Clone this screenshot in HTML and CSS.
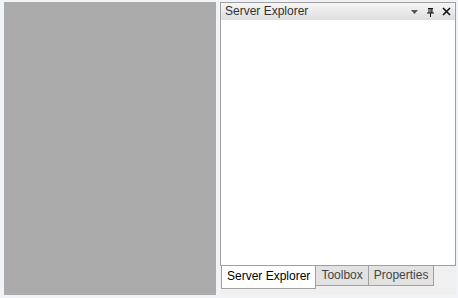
FILE: index.html
```html
<!DOCTYPE html>
<html>
<head>
<meta charset="utf-8">
<link rel="stylesheet" href="styles.css">
</head>
<body>
<div class="layout">
  <div class="doc-area"></div>
  <div class="dock">
    <div class="pane">
      <div class="pane-header">
        <span class="pane-title">Server Explorer</span>
        <span class="pane-buttons">
          <svg width="9" height="9" viewBox="0 0 9 9"><path d="M1 3h7L4.5 7z" fill="#555"/></svg>
          <svg width="9" height="10" viewBox="0 0 9 10"><path d="M2 1.5h5M3 1v5M6 1v5M1 6h7M4.5 6v4" stroke="#111" stroke-width="1" fill="none"/><path d="M5 1v5" stroke="#111" stroke-width="1"/></svg>
          <svg width="9" height="9" viewBox="0 0 9 9"><path d="M1 1l7 7M8 1l-7 7" stroke="#111" stroke-width="1.6"/></svg>
        </span>
      </div>
      <div class="pane-body"></div>
    </div>
    <div class="tabstrip">
      <div class="tab active">Server Explorer</div>
      <div class="tab">Toolbox</div>
      <div class="tab">Properties</div>
    </div>
  </div>
</div>
</body>
</html>
```
FILE: styles.css
```css
html, body {
  margin: 0;
  padding: 0;
  background: #f0f3f8;
  font-family: "Liberation Sans", "DejaVu Sans", sans-serif;
  font-size: 12px;
}
.layout {
  display: flex;
  width: 458px;
  height: 298px;
  box-sizing: border-box;
  padding: 2px 2px 3px 4px;
  gap: 4px;
}
.doc-area {
  width: 212px;
  background: #ababab;
}
.dock {
  flex: 1;
  display: flex;
  flex-direction: column;
  background: #f0f0f0;
}
.pane {
  flex: 1;
  display: flex;
  flex-direction: column;
  border: 1px solid #a0a0a0;
  background: #fff;
}
.pane-header {
  height: 17px;
  display: flex;
  align-items: center;
  justify-content: space-between;
  padding: 0 4px 0 4px;
  background: linear-gradient(#f6f6f6, #dedede);
  color: #333;
}
.pane-title {
  line-height: 17px;
}
.pane-buttons {
  display: flex;
  align-items: center;
  gap: 7px;
}
.pane-buttons svg { display: block; }
.pane-body {
  flex: 1;
  background: #fff;
}
.tabstrip {
  height: 29px;
  display: flex;
  align-items: flex-start;
  padding-left: 1px;
}
.tab {
  height: 19px;
  line-height: 19px;
  padding: 0 5px;
  border: 1px solid #a0a0a0;
  border-top: none;
  border-left: none;
  background: #e2e2e2;
  color: #444;
}
.tab.active {
  height: 22px;
  line-height: 21px;
  background: #fff;
  color: #000;
  border-left: 1px solid #a0a0a0;
}
```
